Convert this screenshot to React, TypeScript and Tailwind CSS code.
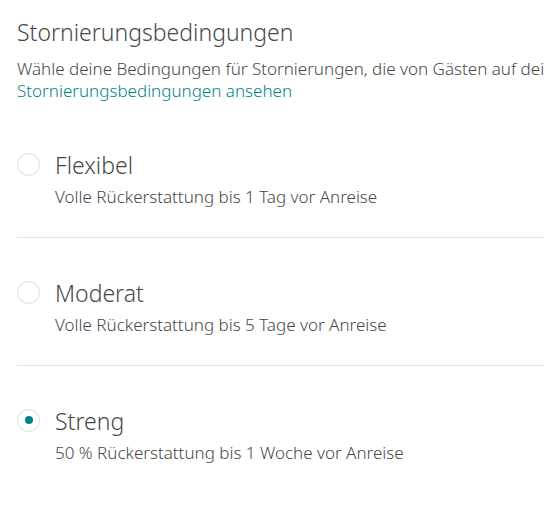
import React from "react";

const options = [
  { label: "Flexibel", desc: "Volle Rückerstattung bis 1 Tag vor Anreise", selected: false },
  { label: "Moderat", desc: "Volle Rückerstattung bis 5 Tage vor Anreise", selected: false },
  { label: "Streng", desc: "50 % Rückerstattung bis 1 Woche vor Anreise", selected: true },
];

export default function App() {
  return (
    <div className="w-[544px] h-[517px] overflow-hidden bg-white" style={{ fontFamily: '"Noto Sans", Arial, sans-serif' }}>
      <div className="w-[800px] pl-[17px] pt-[17px] text-[#484848] font-light">
        <h1 className="text-[23px] leading-[30px]">Stornierungsbedingungen</h1>
        <p className="mt-[11px] text-[17px] leading-[22px] whitespace-nowrap">
          Wähle deine Bedingungen für Stornierungen, die von Gästen auf deiner Seite gesehen werden.
        </p>
        <a className="block text-[17px] leading-[22px] text-[#008489]">Stornierungsbedingungen ansehen</a>
        <div className="mt-[48px]">
          {options.map((o, i) => (
            <div key={o.label}>
              {i > 0 && <div className="h-[40px]" />}
              <div className="flex items-center gap-[16px] h-[28px]">
                <span className="w-[23px] h-[23px] rounded-full border border-[#dbdbdb] flex items-center justify-center shrink-0">
                  {o.selected && <span className="w-[8px] h-[8px] rounded-full bg-[#008489]" />}
                </span>
                <span className="text-[23px] leading-[28px] -ml-[1px] relative top-[1px]">{o.label}</span>
              </div>
              <div className="mt-[8px] pl-[38px] text-[17px] leading-[22px]">{o.desc}</div>
              {i < options.length - 1 && <div className="mt-[29px] h-px bg-[#e4e4e4]" />}
            </div>
          ))}
        </div>
      </div>
    </div>
  );
}
